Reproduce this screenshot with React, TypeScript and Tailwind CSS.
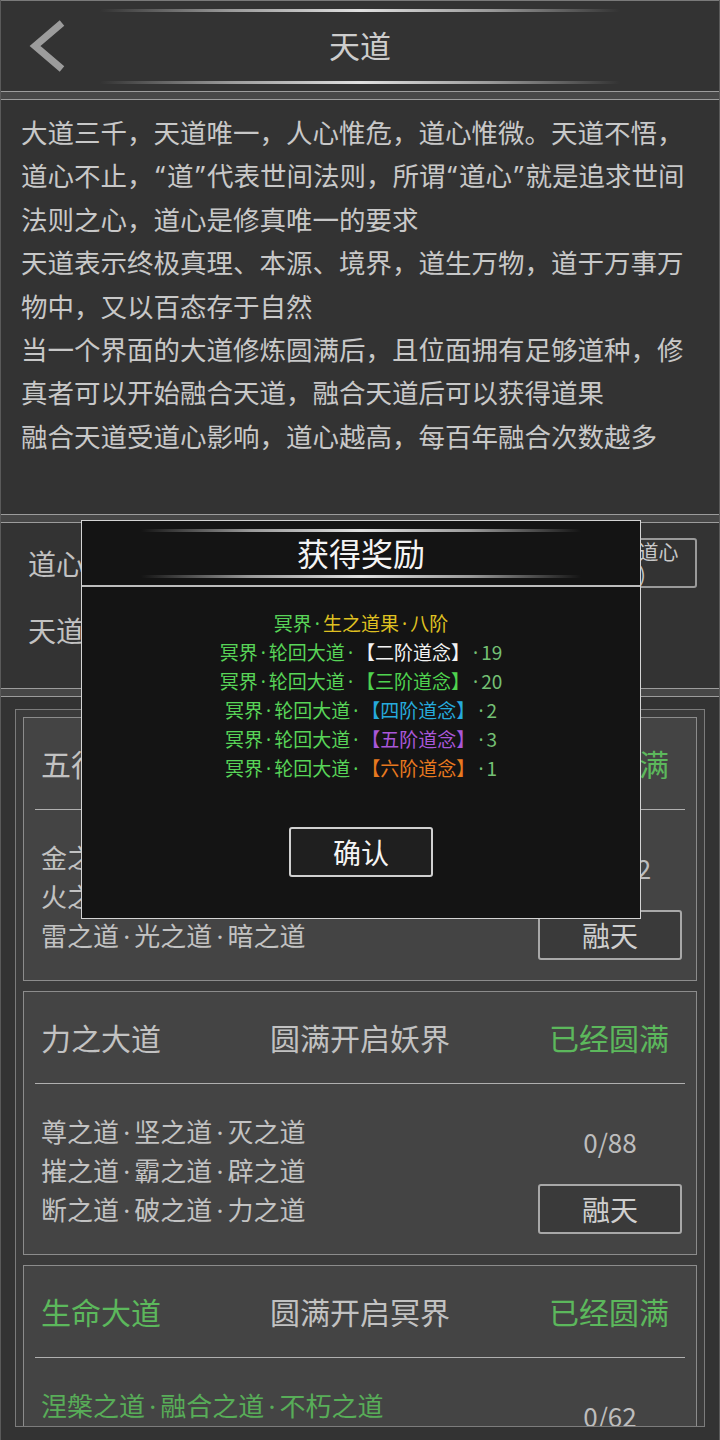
import { Fragment } from 'react';

const intro = [
  '大道三千，天道唯一，人心惟危，道心惟微。天道不悟，',
  '道心不止，“道”代表世间法则，所谓“道心”就是追求世间',
  '法则之心，道心是修真唯一的要求',
  '天道表示终极真理、本源、境界，道生万物，道于万事万',
  '物中，又以百态存于自然',
  '当一个界面的大道修炼圆满后，且位面拥有足够道种，修',
  '真者可以开始融合天道，融合天道后可以获得道果',
  '融合天道受道心影响，道心越高，每百年融合次数越多',
];

type Dao = {
  name: string;
  unlock: string;
  lines: string[];
  count: string;
  green?: boolean;
};

const daos: Dao[] = [
  {
    name: '五行大道',
    unlock: '圆满开启仙界',
    lines: ['金之道·木之道·水之道', '火之道·土之道·风之道', '雷之道·光之道·暗之道'],
    count: '0/1102',
  },
  {
    name: '力之大道',
    unlock: '圆满开启妖界',
    lines: ['尊之道·坚之道·灭之道', '摧之道·霸之道·辟之道', '断之道·破之道·力之道'],
    count: '0/88',
  },
  {
    name: '生命大道',
    unlock: '圆满开启冥界',
    lines: ['涅槃之道·融合之道·不朽之道'],
    count: '0/62',
    green: true,
  },
];

const rewards = [
  { bracket: '二阶道念', color: 'text-[#f2f2f2]', count: '19' },
  { bracket: '三阶道念', color: 'text-[#4fd34f]', count: '20' },
  { bracket: '四阶道念', color: 'text-[#26a9dc]', count: '2' },
  { bracket: '五阶道念', color: 'text-[#a957d9]', count: '3' },
  { bracket: '六阶道念', color: 'text-[#e8791f]', count: '1' },
];

// small latin interpunct; leading-none so it doesn't push the line box
const Dot = () => (
  <span className="px-[0.16em] font-['Noto_Sans',sans-serif] leading-none">·</span>
);

const dotted = (s: string) =>
  s.split('·').map((part, i) => (
    <Fragment key={i}>
      {i > 0 && <Dot />}
      {part}
    </Fragment>
  ));

// latin quotes with a little air around them
const quoted = (s: string) =>
  s.split(/([“”])/).map((part, i) =>
    part === '“' || part === '”' ? (
      <span key={i} className="px-[2px]">
        {part}
      </span>
    ) : (
      <Fragment key={i}>{part}</Fragment>
    ),
  );

const Separator = () => <div className="h-[9px] border-y border-[#9c9c9c] bg-[#474747]" />;

const GlowLine = ({ className }: { className: string }) => (
  <div
    className={`h-[3px] bg-[linear-gradient(90deg,transparent,#9a9a9a_25%,#e0e0e0_50%,#9a9a9a_75%,transparent)] ${className}`}
  />
);

const DaoCard = ({ dao }: { dao: Dao }) => (
  <div className="shrink-0 border border-[#8c8c8c] bg-[#444444] px-[11px]">
    <div className="grid h-[91px] grid-cols-[1fr_auto_1fr] items-center px-[6px] text-[30px]">
      <span className={dao.green ? 'text-[#5cb85c]' : 'text-[#c2c2c2]'}>{dao.name}</span>
      <span className="text-[#c2c2c2]">{dao.unlock}</span>
      <span className="pr-[10px] text-right text-[#5cb85c]">已经圆满</span>
    </div>
    <div className="h-px bg-[#b0b0b0]" />
    <div className="flex justify-between pb-[20px]">
      <div
        className={`pl-[6px] pt-[27px] text-[26px] leading-[39px] ${dao.green ? 'text-[#58ad58]' : 'text-[#c2c2c2]'}`}
      >
        {dao.lines.map((l) => (
          <div key={l}>{dotted(l)}</div>
        ))}
      </div>
      <div className="mr-[3px] flex w-[144px] flex-col items-center pt-[38px]">
        <div className="text-[26px] leading-[39px] text-[#bdbdbd]">{dao.count}</div>
        <button className="mt-[23px] h-[50px] w-[144px] rounded-[3px] border-2 border-[#a8a8a8] bg-[#3a3a3a] text-[28px] text-[#cfcfcf]">
          融天
        </button>
      </div>
    </div>
  </div>
);

export default function App() {
  return (
    <div className="relative h-[1440px] w-[720px] overflow-hidden border-x border-[#5a5a5a] bg-[#333333] font-['Noto_Sans_CJK_SC','Noto_Sans',sans-serif] [text-spacing-trim:space-all]">
      {/* title bar */}
      <header className="flex h-[91px] flex-col items-center border-t border-[#7a7a7a] bg-[#333333]">
        <GlowLine className="mt-[8px] w-[520px]" />
        <div className="grid h-[70px] w-full grid-cols-[1fr_auto_1fr] items-center">
          <svg viewBox="0 0 38 52" className="-mt-[2px] ml-[27px] h-[52px] w-[38px]" fill="none" stroke="#9c9c9c" strokeWidth="7">
            <polyline points="34,3 7,26 34,49" />
          </svg>
          <h1 className="-mt-[4px] text-[31px] text-[#cdcdcd]">天道</h1>
          <div />
        </div>
        <GlowLine className="-mt-[1px] w-[520px]" />
      </header>

      <Separator />

      {/* intro */}
      <section className="h-[414px] whitespace-nowrap px-[20px] pt-[12px] font-['Noto_Sans','Noto_Sans_CJK_SC',sans-serif] text-[26.5px] leading-[43.4px] text-[#c8c8c8]">
        {intro.map((l) => (
          <p key={l}>{quoted(l)}</p>
        ))}
      </section>

      <Separator />

      {/* dao heart */}
      <section className="h-[165px] px-[22px] pl-[27px] pt-[15px] text-[28px] text-[#c2c2c2]">
        <div className="flex h-[50px] items-center justify-between">
          <span>道心：1256</span>
          <button className="flex h-[50px] w-[101px] flex-col items-center justify-center rounded-[3px] border-2 border-[#9a9a9a] pl-[4px] text-[20px] leading-[22px] text-[#c8c8c8]">
            <span>悟道心</span>
            <span className="pr-[30px]">(0)</span>
          </button>
        </div>
        <div className="mt-[20px] flex h-[44px] items-center">
          <span>天道融合次数：3/5</span>
        </div>
      </section>

      <Separator />

      {/* dao list */}
      <section className="px-[14px] pb-[10px] pt-[12px]">
        <div className="flex h-[718px] flex-col gap-[10px] overflow-hidden border border-[#7c7c7c] bg-[#3b3b3b] p-[7px]">
          {daos.map((d) => (
            <DaoCard key={d.name} dao={d} />
          ))}
        </div>
      </section>

      {/* reward popup */}
      <div className="absolute left-[80px] top-[520px] flex h-[399px] w-[560px] flex-col border border-[#d4d4d4] bg-[#141414]">
        <div className="flex h-[66px] flex-col items-center border-b-2 border-[#bdbdbd]">
          <GlowLine className="mt-[8px] w-[440px]" />
          <div className="-mt-[2px] flex h-[43px] items-center text-[32px] text-[#f4f4f4]">获得奖励</div>
          <GlowLine className="mt-[2px] w-[440px]" />
        </div>
        <div className="flex flex-col items-center pt-[21px] text-[19px] leading-[29px] text-[#58d458]">
          <div>
            冥界<Dot />
            <span className="text-[#dfc021]">{dotted('生之道果·八阶')}</span>
          </div>
          {rewards.map((r) => (
            <div key={r.bracket}>
              {dotted('冥界·轮回大道·')}
              <span className={r.color}>【{r.bracket}】</span>
              <span className="text-[#74c074]">
                <Dot />
                {r.count}
              </span>
            </div>
          ))}
          <button className="mt-[45px] h-[50px] w-[144px] rounded-[3px] border-2 border-[#d0d0d0] bg-[#1f1f1f] text-[28px] text-[#f4f4f4]">
            确认
          </button>
        </div>
      </div>
    </div>
  );
}
